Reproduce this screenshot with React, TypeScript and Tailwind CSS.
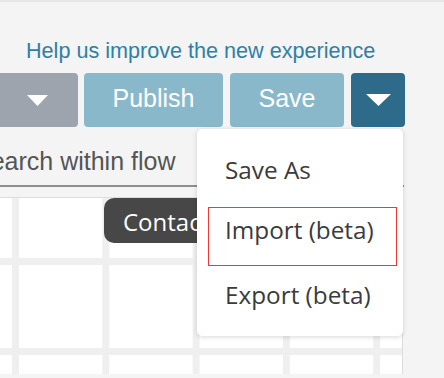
import React from "react";

const arial = { fontFamily: '"Liberation Sans", Arial, sans-serif' };
const sans = { fontFamily: '"Open Sans", "Noto Sans", sans-serif' };

function Tri({ w, h }: { w: number; h: number }) {
  return (
    <svg width={w} height={h} viewBox={`0 0 ${w} ${h}`} className="block">
      <polygon points={`0,0 ${w},0 ${w / 2},${h}`} fill="#ffffff" />
    </svg>
  );
}

export default function App() {
  return (
    <div className="relative w-[444px] h-[378px] overflow-hidden bg-[#f4f4f4] border-t-2 border-[#e6e6e6]">
      <div
        className="pl-[26px] pt-[37px] text-[21.6px] leading-[24px] text-[#2f80a4] whitespace-nowrap"
        style={arial}
      >
        Help us improve the new experience
      </div>

      <div className="mt-[10px] flex h-[54px]" style={arial}>
        <div className="ml-[-22px] w-[100px] h-full rounded-[4px] bg-[#9ea4ae] flex items-center justify-end pr-[30px]">
          <Tri w={21} h={11} />
        </div>
        <div className="ml-[6px] w-[139px] h-full rounded-[4px] bg-[#8ab8cb] flex items-center justify-center pb-[3px] text-[25px] leading-[25px] text-white">
          Publish
        </div>
        <div className="ml-[7px] w-[114px] h-full rounded-[4px] bg-[#8ab8cb] flex items-center justify-center pb-[3px] text-[25px] leading-[25px] text-white">
          Save
        </div>
        <div className="ml-[7px] w-[54px] h-full rounded-[4px] bg-[#2e6a8a] flex items-center justify-center">
          <Tri w={25} h={12} />
        </div>
      </div>

      <div
        className="ml-[-26px] w-[430px] pt-[20px] pb-[10px] text-[25px] leading-[28px] text-[#555555] whitespace-nowrap border-b-2 border-[#8e8e8e]"
        style={arial}
      >
        Search within flow
      </div>

      <div className="mt-[10px] relative w-[403px] h-[177px] border-r border-t border-[#dcdcdc] bg-white bg-[linear-gradient(to_right,#efefef_7px,transparent_7px),linear-gradient(to_bottom,#efefef_7px,transparent_7px)] bg-[size:90.3px_90px] bg-[position:12px_60px]">
        <div className="absolute left-[104px] top-0 w-[93px] h-[45px] overflow-hidden">
          <div
            className="w-[160px] h-[45px] rounded-[10px] bg-[#474747] pl-[19px] pt-[8px] text-[24px] leading-[32px] text-white whitespace-nowrap"
            style={sans}
          >
            Contact flow
          </div>
        </div>
      </div>

      <div
        className="absolute left-[197px] top-[127px] w-[206px] h-[207px] rounded-[5px] bg-white shadow-[0_1px_5px_rgba(0,0,0,0.16)] pt-[25px] flex flex-col text-[24.3px] leading-[32px] text-[#3b3b3b]"
        style={sans}
      >
        <div className="pl-[28px] h-[32px] whitespace-nowrap">Save As</div>
        <div className="mt-[21px] ml-[11px] mr-[6px] h-[59px] border border-[#ee3a33] pl-[16px] pt-[6px] whitespace-nowrap">
          Import (beta)
        </div>
        <div className="mt-[13px] pl-[28px] h-[32px] whitespace-nowrap">Export (beta)</div>
      </div>
    </div>
  );
}
